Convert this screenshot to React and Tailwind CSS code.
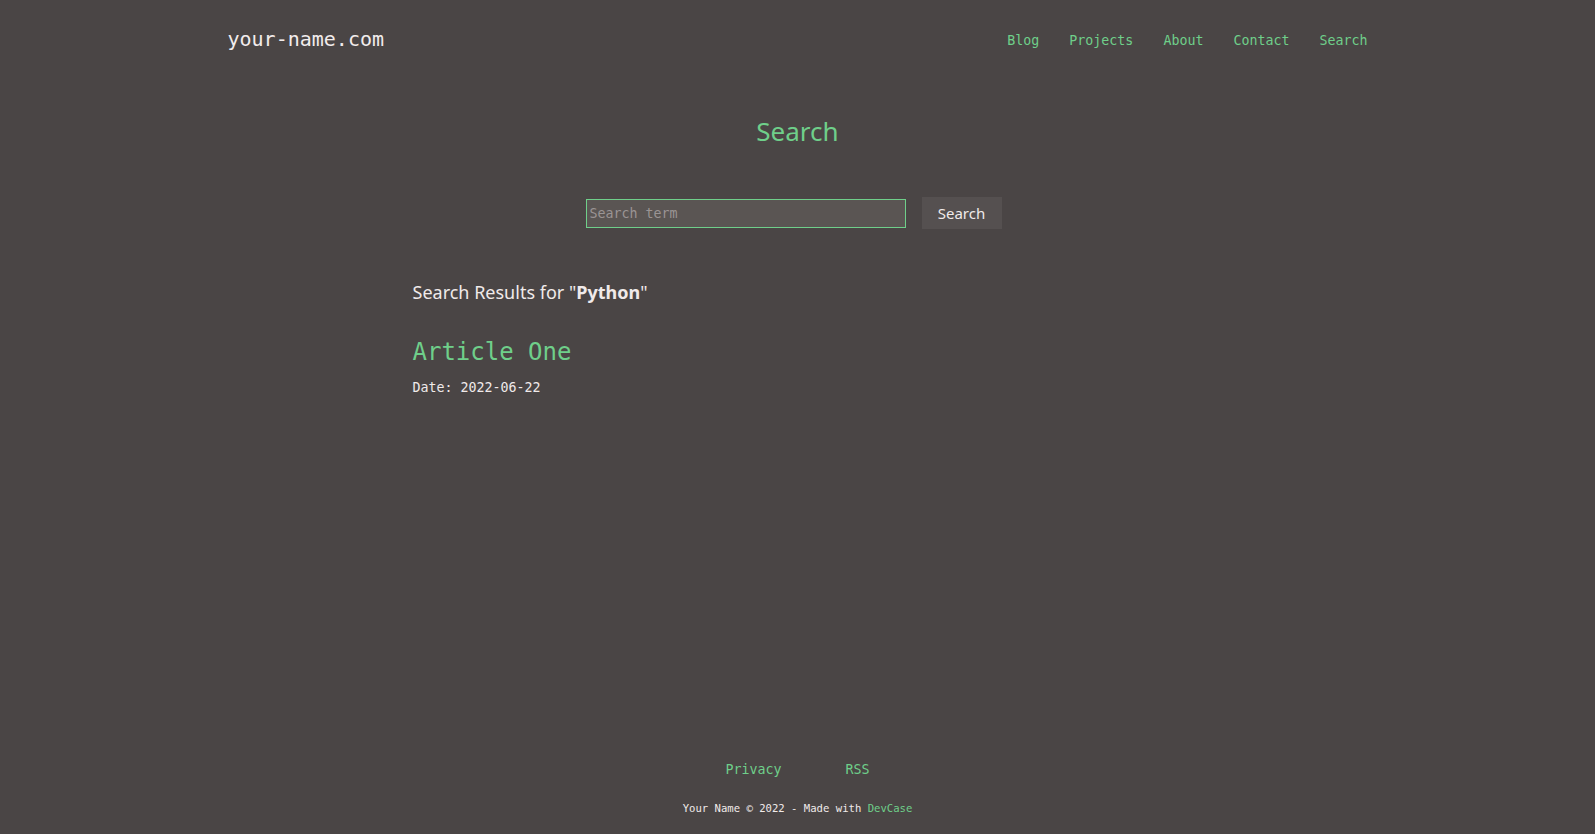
const mono = "font-['DejaVu_Sans_Mono','Liberation_Mono',monospace]";
const sans = "font-['Noto_Sans','Open_Sans',sans-serif]";

const NavBar = () => {
  const links = ['Blog', 'Projects', 'About', 'Contact', 'Search'];
  return (
    <header className="w-full max-w-[1140px] mx-auto h-[80px] flex items-center justify-between">
      <a href="#" className={`${mono} text-[20px] text-[#f2ecec] -mt-[3px]`}>your-name.com</a>
      <nav className="flex items-center gap-[30px] mt-[2px]">
        {links.map((l) => (
          <a key={l} href="#" className={`${mono} text-[13.3px] text-[#6fcf8a]`}>
            {l}
          </a>
        ))}
      </nav>
    </header>
  );
};

const App = () => {
  return (
    <div className="min-h-screen bg-[#4a4545] flex flex-col">
      <NavBar />

      <main className="flex-1">
        {/* Title */}
        <h1 className={`${sans} text-center text-[26px] text-[#6fcf8a] mt-[33px] leading-[36px]`}>Search</h1>

        {/* Search form */}
        <form className="flex justify-center items-center gap-[16px] mt-[48px] pr-[8px]" onSubmit={(e) => e.preventDefault()}>
          <input
            type="text"
            placeholder="Search term"
            className={`${mono} w-[320px] h-[29px] px-[3px] text-[13.3px] bg-[#5a5553] border border-[#6fcf8a] text-[#eee] placeholder:text-[#9a9494] outline-none`}
          />
          <button className={`${sans} w-[80px] h-[32px] bg-[#555050] text-[15px] text-[#f0eaea]`}>Search</button>
        </form>

        {/* Results */}
        <section className="max-w-[770px] mx-auto mt-[49px]">
          <h2 className={`${sans} text-[18px] text-[#f0eaea] leading-[28px]`}>
            Search Results for "<strong className="font-bold">Python</strong>"
          </h2>
          <article className="mt-[30px]">
            <a href="#" className={`${mono} block text-[24px] text-[#6fcf8a] leading-[32px]`}>Article One</a>
            <p className={`${mono} text-[13.3px] text-[#f0eaea] mt-[10px]`}>Date: 2022-06-22</p>
          </article>
        </section>
      </main>

      <footer className="flex flex-col items-center pb-[17px]">
        <div className="flex gap-[64px]">
          <a href="#" className={`${mono} text-[13.3px] text-[#6fcf8a]`}>Privacy</a>
          <a href="#" className={`${mono} text-[13.3px] text-[#6fcf8a]`}>RSS</a>
        </div>
        <p className={`${mono} text-[10.6px] text-[#f0eaea] mt-[21px]`}>
          Your Name © 2022 - Made with <a href="#" className="text-[#6fcf8a]">DevCase</a>
        </p>
      </footer>
    </div>
  );
};

export default App;
